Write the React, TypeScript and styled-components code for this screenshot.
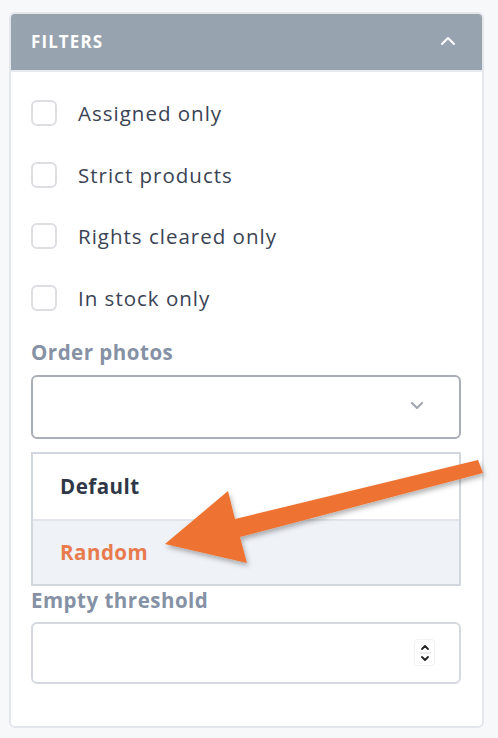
import styled, { createGlobalStyle } from "styled-components";

const GlobalStyle = createGlobalStyle`
  html, body {
    margin: 0;
    padding: 0;
    background: #f7f8fa;
    font-family: "Open Sans", "Liberation Sans", sans-serif;
  }
  * {
    box-sizing: border-box;
  }
`;

const filters = ["Assigned only", "Strict products", "Rights cleared only", "In stock only"];

const ChevronUp = () => (
  <svg width="16" height="10" viewBox="0 0 16 10">
    <path d="M2 8 L8 2 L14 8" fill="none" stroke="#fff" strokeWidth="2" strokeLinecap="round" strokeLinejoin="round" />
  </svg>
);

const ChevronDown = () => (
  <svg width="14" height="9" viewBox="0 0 14 9">
    <path d="M2 2 L7 7 L12 2" fill="none" stroke="#a3a7b0" strokeWidth="2.2" strokeLinecap="round" strokeLinejoin="round" />
  </svg>
);

const App = () => {
  return (
    <Page>
      <GlobalStyle />
      <Card>
        <Header>
          <HeaderTitle>FILTERS</HeaderTitle>
          <ChevronUp />
        </Header>
        <Body>
          <CheckList>
            {filters.map((f) => (
              <CheckRow key={f}>
                <Box />
                <CheckLabel>{f}</CheckLabel>
              </CheckRow>
            ))}
          </CheckList>
          <FieldLabel>Order photos</FieldLabel>
          <Select>
            <ChevronDown />
          </Select>
          <Menu>
            <Option>Default</Option>
            <Option $active>Random</Option>
          </Menu>
          <FieldLabel $tight>Empty threshold</FieldLabel>
          <NumberBox>
            <Spinner>
              <svg width="12" height="22" viewBox="0 0 12 22">
                <path d="M3 7 L6 4 L9 7" fill="none" stroke="#222" strokeWidth="1.8" strokeLinecap="round" strokeLinejoin="round" />
                <line x1="0" y1="11" x2="12" y2="11" stroke="#dcdcdc" strokeWidth="1.2" />
                <path d="M3 15 L6 18 L9 15" fill="none" stroke="#222" strokeWidth="1.8" strokeLinecap="round" strokeLinejoin="round" />
              </svg>
            </Spinner>
          </NumberBox>
        </Body>
      </Card>
      <Arrow width="498" height="738" viewBox="0 0 498 738">
        <defs>
          <filter id="shadow" x="-10%" y="-10%" width="130%" height="140%">
            <feDropShadow dx="1.5" dy="3" stdDeviation="2.5" floodColor="#000" floodOpacity="0.3" />
          </filter>
        </defs>
        <polygon
          points="478,460 483,473 240,537 247,563 165,544 228,491 235,519"
          fill="#ee7331"
          filter="url(#shadow)"
        />
      </Arrow>
    </Page>
  );
};

export default App;

const Page = styled.div`
  position: relative;
  width: 498px;
  height: 738px;
  padding: 12px 14px 0 9px;
  overflow: hidden;
`;

const Card = styled.div`
  width: 475px;
  background: #fff;
  border: 2px solid #e3e6eb;
  border-radius: 6px;
  overflow: hidden;
`;

const Header = styled.div`
  height: 58px;
  background: #98a3b0;
  border-bottom: 2px solid #e6e9ee;
  display: flex;
  align-items: center;
  justify-content: space-between;
  padding: 0 26px 2px 20px;
`;

const HeaderTitle = styled.span`
  color: #fff;
  font-weight: 700;
  font-size: 17px;
  letter-spacing: 1.1px;
`;

const Body = styled.div`
  display: flex;
  flex-direction: column;
  padding: 28px 21px 42px 20px;
`;

const CheckList = styled.div`
  display: flex;
  flex-direction: column;
  gap: 35.6px;
`;

const CheckRow = styled.div`
  display: flex;
  align-items: center;
  height: 26px;
  gap: 21px;
`;

const Box = styled.div`
  width: 26px;
  height: 26px;
  border: 2px solid #dcdee2;
  border-radius: 6px;
  background: #fff;
`;

const CheckLabel = styled.span`
  font-size: 20.5px;
  letter-spacing: 1px;
  color: #3a4354;
`;

const FieldLabel = styled.div<{ $tight?: boolean }>`
  font-size: 20.5px;
  font-weight: 700;
  letter-spacing: 0.5px;
  color: #8591a4;
  line-height: 26px;
  margin-top: ${(p) => (p.$tight ? "1px" : "28px")};
  margin-bottom: ${(p) => (p.$tight ? "9px" : "10px")};
`;

const Select = styled.div`
  height: 64px;
  border: 2px solid #a9aeb7;
  border-radius: 6px;
  display: flex;
  align-items: center;
  justify-content: flex-end;
  padding: 0 35px 2px 0;
`;

const Menu = styled.div`
  margin-top: 13px;
  border: 2px solid #d2d7de;
  display: flex;
  flex-direction: column;
`;

const Option = styled.div<{ $active?: boolean }>`
  height: 65px;
  display: flex;
  align-items: center;
  padding-left: 27px;
  font-size: 20.5px;
  font-weight: 700;
  letter-spacing: 0.5px;
  color: ${(p) => (p.$active ? "#e87b4d" : "#2f3748")};
  background: ${(p) => (p.$active ? "#eff2f7" : "#fff")};
  border-top: ${(p) => (p.$active ? "2px solid #e2e6ec" : "none")};
`;

const NumberBox = styled.div`
  height: 62px;
  border: 2px solid #d5d9df;
  border-radius: 6px;
  display: flex;
  align-items: center;
  justify-content: flex-end;
  padding-right: 25px;
`;

const Spinner = styled.div`
  width: 19px;
  height: 25px;
  border-radius: 3px;
  background: #fff;
  box-shadow: 0 0 0 1px #f2f2f2;
  display: flex;
  align-items: center;
  justify-content: center;
`;

const Arrow = styled.svg`
  position: absolute;
  left: 0;
  top: 0;
  pointer-events: none;
`;
